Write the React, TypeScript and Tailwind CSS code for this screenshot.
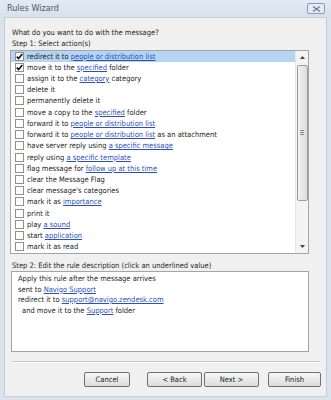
import React from "react";

type Action = { pre: string; link?: string; post?: string; checked?: boolean };

const actions: Action[] = [
  { pre: "redirect it to ", link: "people or distribution list", checked: true },
  { pre: "move it to the ", link: "specified", post: " folder", checked: true },
  { pre: "assign it to the ", link: "category", post: " category" },
  { pre: "delete it" },
  { pre: "permanently delete it" },
  { pre: "move a copy to the ", link: "specified", post: " folder" },
  { pre: "forward it to ", link: "people or distribution list" },
  { pre: "forward it to ", link: "people or distribution list", post: " as an attachment" },
  { pre: "have server reply using ", link: "a specific message" },
  { pre: "reply using ", link: "a specific template" },
  { pre: "flag message for ", link: "follow up at this time" },
  { pre: "clear the Message Flag" },
  { pre: "clear message's categories" },
  { pre: "mark it as ", link: "importance" },
  { pre: "print it" },
  { pre: "play ", link: "a sound" },
  { pre: "start ", link: "application" },
  { pre: "mark it as read" },
];

function L({ children }: { children: React.ReactNode }) {
  return <span className="text-[#2c4fc0] underline underline-offset-1">{children}</span>;
}

function Check({ on }: { on?: boolean }) {
  return (
    <div className="w-[9px] h-[9px] shrink-0 border border-[#8f8f8f] bg-white flex items-center justify-center">
      {on && (
        <svg width="7" height="7" viewBox="0 0 7 7">
          <path d="M0.8 3.6 L2.6 5.6 L6.3 1" fill="none" stroke="#111" strokeWidth="1.6" />
        </svg>
      )}
    </div>
  );
}

function Scrollbar() {
  return (
    <div className="w-[13px] shrink-0 bg-[#f4f4f4] border-l border-[#e6e6e6] flex flex-col items-center">
      <div className="h-[13px] w-full flex items-center justify-center">
        <svg width="5" height="3" viewBox="0 0 5 3"><path d="M0 3 L2.5 0 L5 3 Z" fill="#444" /></svg>
      </div>
      <div className="w-[11px] h-[136px] mt-[1px] rounded-[2px] border border-[#9c9c9c] bg-gradient-to-r from-[#f2f2f2] to-[#dcdcdc] flex flex-col items-center justify-center gap-[1px]">
        <div className="w-[4px] h-px bg-[#8a8a8a]" />
        <div className="w-[4px] h-px bg-[#8a8a8a]" />
        <div className="w-[4px] h-px bg-[#8a8a8a]" />
      </div>
      <div className="flex-1" />
      <div className="h-[13px] w-full flex items-center justify-center">
        <svg width="5" height="3" viewBox="0 0 5 3"><path d="M0 0 L2.5 3 L5 0 Z" fill="#444" /></svg>
      </div>
    </div>
  );
}

function Btn({ label, w }: { label: string; w: string }) {
  return (
    <div className={`${w} h-[15px] rounded-[2px] border border-[#707070] bg-gradient-to-b from-[#f6f6f6] to-[#dddddd] flex items-center justify-center text-[#1e1e1e]`}>
      {label}
    </div>
  );
}

export default function App() {
  return (
    <div className="w-[331px] h-[400px] bg-[#dae3ed] flex flex-col font-['DejaVu_Sans_Condensed',Tahoma,sans-serif] text-[7.5px] leading-[11px] text-[#1e1e1e] overflow-hidden">
      {/* title bar */}
      <div className="h-[17px] shrink-0 flex items-center justify-between pl-[7px] pr-[6px] bg-gradient-to-b from-[#e3eaf3] to-[#d7e1ec]">
        <span className="text-[9px] text-[#4d5a6a]">Rules Wizard</span>
        <div className="w-[18px] h-[11px] rounded-[2px] border border-[#8c9bb0] bg-[#e4ebf3] flex items-center justify-center">
          <svg width="9" height="6" viewBox="0 0 9 6">
            <path d="M1 0.5 L8 5.5 M8 0.5 L1 5.5" stroke="#6f7c8c" strokeWidth="1.3" />
          </svg>
        </div>
      </div>

      {/* body */}
      <div className="flex-1 mx-[4px] mb-[3px] bg-[#f0f0f0] border border-[#c6ced8] flex flex-col pt-[9px]">
        <div className="ml-[7px]">What do you want to do with the message?</div>
        <div className="ml-[7px]">Step 1: Select action(s)</div>

        <div className="ml-[5px] mt-[0.5px] w-[299px] h-[204px] bg-white border border-[#a5a5a5] flex">
          <div className="flex-1 flex flex-col">
            {actions.map((a, i) => (
              <div
                key={i}
                className={`h-[11.25px] flex items-center gap-[3px] pl-[4px] whitespace-nowrap ${i === 0 ? "bg-[#b6d4f3]" : ""}`}
              >
                <Check on={a.checked} />
                <span>
                  {a.pre}
                  {a.link && <L>{a.link}</L>}
                  {a.post}
                </span>
              </div>
            ))}
          </div>
          <Scrollbar />
        </div>

        <div className="ml-[7px] mt-[6px]">Step 2: Edit the rule description (click an underlined value)</div>
        <div className="ml-[6px] mt-[0.5px] w-[298px] h-[81px] bg-white border border-[#a5a5a5] pl-[6px] pt-[2px] leading-[10.5px] whitespace-nowrap">
          <div>Apply this rule after the message arrives</div>
          <div>sent to <L>Navigo Support</L></div>
          <div>redirect it to <L>support@navigo.zendesk.com</L></div>
          <div className="pl-[4px]">and move it to the <L>Support</L> folder</div>
        </div>

        <div className="ml-[7px] mt-[9px] w-[308px] h-[2px] border-t border-[#c9c9c9] border-b border-b-white" />

        <div className="mt-[9px] flex items-center pl-[79px]">
          <Btn label="Cancel" w="w-[46px]" />
          <div className="w-[17px]" />
          <Btn label="< Back" w="w-[55px]" />
          <div className="w-[2px]" />
          <Btn label="Next >" w="w-[55px]" />
          <div className="w-[9px]" />
          <Btn label="Finish" w="w-[53px]" />
        </div>
      </div>
    </div>
  );
}
